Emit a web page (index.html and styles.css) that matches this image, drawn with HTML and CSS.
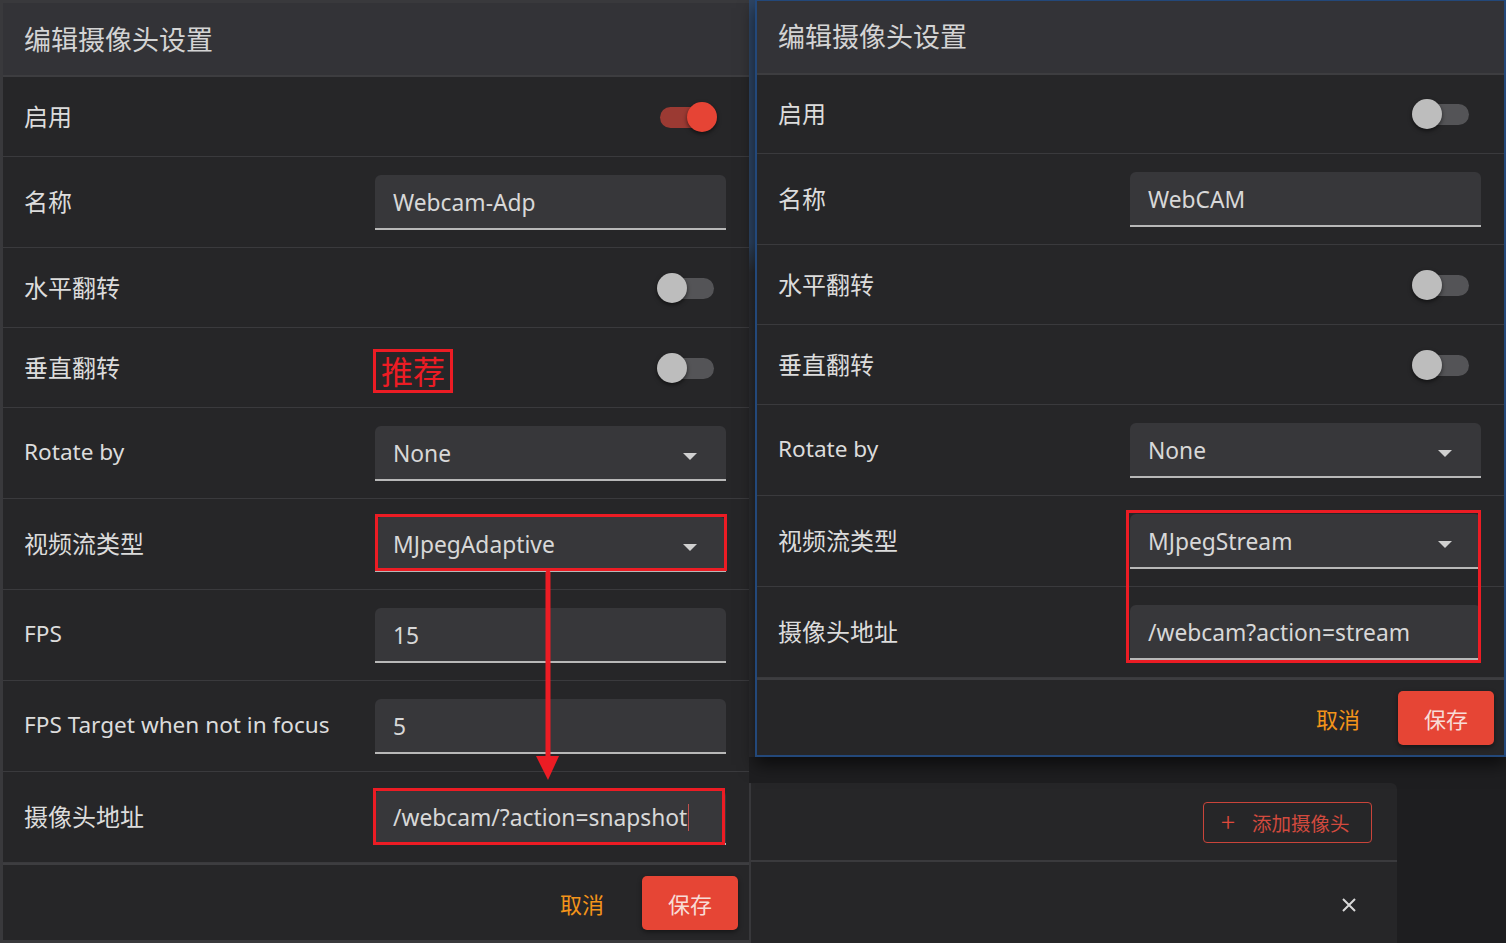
FILE: index.html
```html
<!DOCTYPE html>
<html lang="zh">
<head>
<meta charset="utf-8">
<title>编辑摄像头设置</title>
<link rel="stylesheet" href="styles.css">
</head>
<body>
<div class="stage">
  <div class="left-wrap">
    <section class="dlg dlg-left">
      <div class="head">编辑摄像头设置</div>
      <div class="row sw"><div class="label">启用</div><div class="ctrl end"><span class="switch on"><span class="track"></span><span class="thumb"></span></span></div></div>
      <div class="row in"><div class="label">名称</div><div class="ctrl"><div class="field">Webcam-Adp</div></div></div>
      <div class="row sw"><div class="label">水平翻转</div><div class="ctrl end"><span class="switch"><span class="track"></span><span class="thumb"></span></span></div></div>
      <div class="row sw"><div class="label">垂直翻转</div><div class="ctrl"><span class="tag">推荐</span><span class="switch"><span class="track"></span><span class="thumb"></span></span></div></div>
      <div class="row in"><div class="label en">Rotate by</div><div class="ctrl"><div class="field select"><span>None</span><span class="caret"></span></div></div></div>
      <div class="row in"><div class="label">视频流类型</div><div class="ctrl"><div class="field select"><span>MJpegAdaptive</span><span class="caret"></span></div></div></div>
      <div class="row in"><div class="label en">FPS</div><div class="ctrl"><div class="field">15</div></div></div>
      <div class="row in"><div class="label en">FPS Target when not in focus</div><div class="ctrl"><div class="field">5</div></div></div>
      <div class="row in"><div class="label">摄像头地址</div><div class="ctrl"><div class="field">/webcam/?action=snapshot<span class="cursor"></span></div></div></div>
      <div class="foot"><span class="cancel">取消</span><span class="save">保存</span></div>
    </section>
  </div>
  <div class="right-col">
    <div class="top-row">
      <div class="seam"></div>
      <section class="dlg dlg-right">
        <div class="head">编辑摄像头设置</div>
        <div class="row sw r1"><div class="label">启用</div><div class="ctrl end"><span class="switch"><span class="track"></span><span class="thumb"></span></span></div></div>
        <div class="row in"><div class="label">名称</div><div class="ctrl"><div class="field">WebCAM</div></div></div>
        <div class="row sw"><div class="label">水平翻转</div><div class="ctrl end"><span class="switch"><span class="track"></span><span class="thumb"></span></span></div></div>
        <div class="row sw"><div class="label">垂直翻转</div><div class="ctrl end"><span class="switch"><span class="track"></span><span class="thumb"></span></span></div></div>
        <div class="row in"><div class="label en">Rotate by</div><div class="ctrl"><div class="field select"><span>None</span><span class="caret"></span></div></div></div>
        <div class="row in"><div class="label">视频流类型</div><div class="ctrl"><div class="field select"><span>MJpegStream</span><span class="caret"></span></div></div></div>
        <div class="row in"><div class="label">摄像头地址</div><div class="ctrl"><div class="field">/webcam?action=stream</div></div></div>
        <div class="foot"><span class="cancel">取消</span><span class="save">保存</span></div>
      </section>
    </div>
    <div class="bg-card">
      <div class="card-row">
        <span class="add-btn"><span class="plus">+</span>添加摄像头</span>
      </div>
      <div class="card-row2">
        <svg class="close" width="16" height="16" viewBox="0 0 16 16"><path d="M2 2L14 14M14 2L2 14" stroke="#d8d8d8" stroke-width="2" fill="none"/></svg>
      </div>
    </div>
  </div>
</div>
<svg class="annot" width="1506" height="943" viewBox="0 0 1506 943">
  <rect x="376.5" y="515.5" width="349" height="54" fill="none" stroke="#ec1c24" stroke-width="3"/>
  <rect x="374.5" y="789.5" width="349" height="54" fill="none" stroke="#ec1c24" stroke-width="3"/>
  <rect x="1127.5" y="511.5" width="352" height="150" fill="none" stroke="#ec1c24" stroke-width="3"/>
  <line x1="548" y1="573" x2="548" y2="758" stroke="#ec1c24" stroke-width="5" stroke-linecap="round"/>
  <polygon points="536,756 559,756 548,780" fill="#ec1c24"/>
</svg>
</body>
</html>
```

FILE: styles.css
```css
* { box-sizing: border-box; }
html, body { margin: 0; padding: 0; }
body {
  width: 1506px;
  height: 943px;
  overflow: hidden;
  position: relative;
  background: #1e1e20;
  font-family: "Noto Sans", "Noto Sans CJK SC", sans-serif;
  color: #dadada;
}
.stage { display: flex; height: 943px; }

.left-wrap {
  width: 749px;
  height: 943px;
  background: #39393c;
  padding: 3px 0 3px 3px;
}
.dlg {
  background: #262628;
  display: flex;
  flex-direction: column;
  position: relative;
}
.dlg-left { width: 746px; height: 937px; }

.head {
  height: 74px;
  flex: none;
  background: #333337;
  border-bottom: 2px solid #3d3d40;
  display: flex;
  align-items: center;
  padding: 0 0 2px 21px;
  font-size: 27px;
  color: #d4d4d4;
  font-family: "Noto Sans CJK SC", sans-serif;
}

.row {
  flex: none;
  display: grid;
  grid-template-columns: 1fr 351px;
  align-items: center;
  padding: 0 23px 0 21px;
  border-bottom: 1px solid #3a3a3d;
  font-size: 24px;
}
.row.sw { height: 80px; }
.row.r1 { height: 79px; }
.row.in { height: 91px; }
.label { color: #dcdcdc; white-space: nowrap; padding-bottom: 3px; }
.label.en { font-size: 22.6px; }

.ctrl { display: flex; align-items: center; justify-content: space-between; }
.ctrl.end { justify-content: flex-end; }

.field {
  width: 100%;
  height: 55px;
  background: #37373a;
  border-radius: 6px 6px 0 0;
  border-bottom: 2px solid #b8b8b8;
  padding: 2px 0 0 18px;
  display: flex;
  align-items: center;
  color: #d8d8d8;
  white-space: nowrap;
  font-size: 22.8px;
}
.field.select { justify-content: space-between; padding-right: 29px; }
.caret {
  width: 0; height: 0;
  border-left: 7px solid transparent;
  border-right: 7px solid transparent;
  border-top: 7px solid #d0d0d0;
  margin-top: 6px;
}
.cursor {
  display: inline-block;
  width: 1px;
  height: 27px;
  background: #c0504d;
  margin-left: 1px;
}

.switch { position: relative; width: 60px; height: 30px; margin-right: 9px; flex: none; }
.switch .track {
  position: absolute; left: 3px; right: 3px; top: 5px; height: 21px;
  border-radius: 11px; background: #545457;
}
.switch .thumb {
  position: absolute; left: 0; top: 0; width: 30px; height: 30px;
  border-radius: 50%; background: #bdbdbd;
  box-shadow: 0 2px 4px rgba(0,0,0,.55);
}
.switch.on .track { background: #9b3a33; }
.switch.on .thumb { left: 30px; background: #e64435; }

.tag {
  border: 3px solid #ec1c24;
  color: #ec1c24;
  font-family: "Noto Sans CJK SC", sans-serif;
  font-size: 32px;
  height: 44px;
  line-height: 36px;
  padding: 0 5px 0 5px;
  margin-left: -2px;
  margin-top: 6px;
}

.foot {
  flex: 1;
  border-top: 2px solid #3d3d40;
  display: flex;
  align-items: center;
  justify-content: flex-end;
  padding-right: 11px;
}
.cancel { color: #f3941a; font-size: 22px; margin-right: 38px; font-family: "Noto Sans CJK SC", sans-serif; }
.save {
  width: 96px; height: 54px;
  background: #e64535;
  border-radius: 5px;
  color: #f8dcd7;
  font-size: 22px;
  font-family: "Noto Sans CJK SC", sans-serif;
  display: flex; align-items: center; justify-content: center;
  box-shadow: 0 2px 5px rgba(0,0,0,.45);
}

.right-col { width: 757px; display: flex; flex-direction: column; }
.top-row { display: flex; height: 757px; flex: none; }
.seam { width: 6px; background: linear-gradient(#2e4666 0, #2e4666 32%, #2b2d31 36%, #2b2b2e 100%); }
.dlg-right {
  width: 751px; height: 757px;
  border: 2px solid #23487a;
  border-top-width: 1px;
  box-shadow: 0 8px 16px rgba(0,0,0,.6);
  z-index: 1;
}
.dlg-right .head { padding-bottom: 4px; }
.dlg-right .foot { padding-right: 10px; }

.bg-card {
  margin-top: 26px;
  width: 648px;
  height: 160px;
  background: #262628;
  border-left: 2px solid #38383b;
  border-top-right-radius: 6px;
  display: flex;
  flex-direction: column;
}
.card-row {
  height: 79px;
  border-bottom: 2px solid #3a3a3d;
  display: flex;
  align-items: center;
  justify-content: flex-end;
  padding: 0 25px 0 0;
}
.add-btn {
  width: 169px; height: 41px;
  border: 1px solid #c9443a;
  border-radius: 4px;
  color: #d24a3e;
  font-size: 19.5px;
  font-family: "Noto Sans CJK SC", sans-serif;
  display: flex; align-items: center;
  padding-left: 17px;
  margin-top: 2px;
}
.plus { font-size: 26px; font-weight: 300; margin-right: 17px; line-height: 1; color: #e04a3c; margin-top: -3px; }
.card-row2 {
  flex: 1;
  display: flex;
  align-items: center;
  justify-content: flex-end;
  padding: 4px 40px 0 0;
}
.close { display: block; }

.annot { position: absolute; left: 0; top: 0; pointer-events: none; z-index: 5; }
```
